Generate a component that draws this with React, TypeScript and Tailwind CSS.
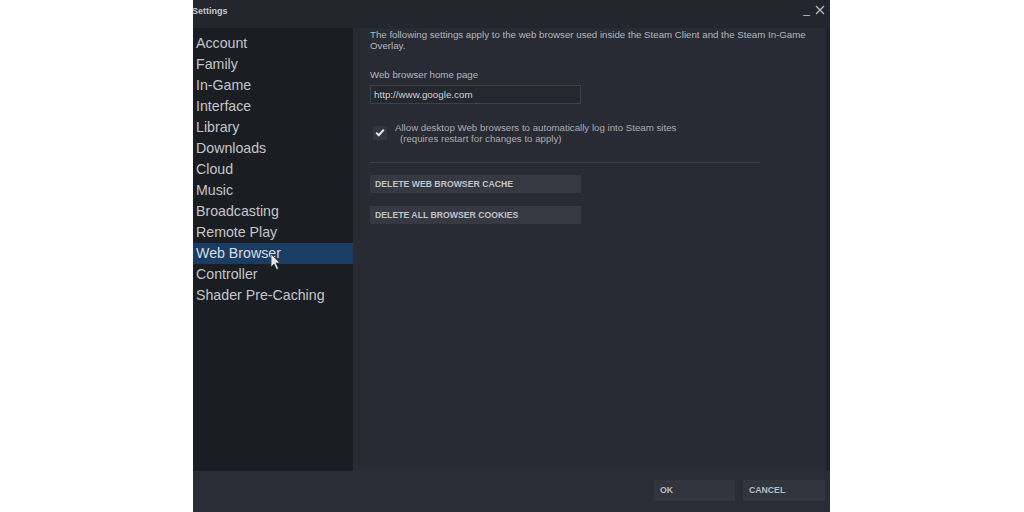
import React from "react";

const items = [
  "Account",
  "Family",
  "In-Game",
  "Interface",
  "Library",
  "Downloads",
  "Cloud",
  "Music",
  "Broadcasting",
  "Remote Play",
  "Web Browser",
  "Controller",
  "Shader Pre-Caching",
];

export default function App() {
  return (
    <div
      className="flex w-[1024px] h-[512px] bg-white overflow-hidden"
      style={{ fontFamily: '"Liberation Sans", Arial, sans-serif' }}
    >
      <div className="w-[193px] shrink-0" />
      <div className="w-[637px] shrink-0 flex flex-col bg-[#23262d]">
        {/* title bar */}
        <div className="h-[28px] flex items-start justify-between relative">
          <span className="text-[9px] text-[#c8cace] font-bold mt-[5px] -ml-[1px]">Settings</span>
          <div className="flex items-start gap-[5px] mr-[5px] mt-[2px] text-[#b8bbc0]">
            <span className="text-[12px] leading-none mt-[1px]">_</span>
            <svg width="10" height="10" viewBox="0 0 10 10" className="mt-[3px]">
              <path d="M1 1 L9 9 M9 1 L1 9" stroke="#b8bbc0" strokeWidth="1.3" />
            </svg>
          </div>
        </div>
        <div className="flex flex-1 min-h-0">
          {/* sidebar */}
          <div className="w-[160px] shrink-0 bg-[#1a1d22] pt-[5px] relative">
            {items.map((it) => (
              <div
                key={it}
                className={`h-[21px] leading-[21px] pl-[3px] text-[14.2px] ${
                  it === "Web Browser" ? "bg-[#1c3d63] text-[#d6dbe2]" : "text-[#c3c5ca]"
                }`}
              >
                {it}
              </div>
            ))}
            <svg
              width="12"
              height="18"
              viewBox="0 0 12 18"
              className="absolute left-[77px] top-[225px]"
            >
              <path
                d="M1 1 L1 14 L4 11 L6.5 16.5 L8.5 15.5 L6 10 L10 10 Z"
                fill="#e8e8e8"
                stroke="#333"
                strokeWidth="0.8"
              />
            </svg>
          </div>
          {/* main */}
          <div className="flex-1 bg-[#282b33] pl-[17px] pt-[1px] border-r-[4px] border-[#1f2228]">
            <p className="text-[9.7px] leading-[11px] text-[#b4b7bc] w-[445px]">
              The following settings apply to the web browser used inside the Steam Client and the Steam In-Game Overlay.
            </p>
            <div className="mt-[17px] text-[9.7px] text-[#b4b7bc]">Web browser home page</div>
            <div className="mt-[2px] w-[211px] h-[19px] border border-[#3d4049] bg-[#24272e] text-[9.8px] text-[#d0d2d6] pl-[3px] leading-[17px]">
              http://www.google.com
            </div>
            <div className="mt-[21px] flex items-start">
              <div className="ml-[3px] mt-[1px] w-[14px] h-[14px] bg-[#33363e] flex items-center justify-center rounded-[1px]">
                <svg width="10" height="9" viewBox="0 0 10 9">
                  <path d="M1.2 4.6 L3.8 7.2 L8.8 1.6" stroke="#e6e7ea" strokeWidth="2" fill="none" />
                </svg>
              </div>
              <div className="ml-[8px] -mt-[3px] text-[9.7px] leading-[11px] text-[#a9acb2]">
                <div>Allow desktop Web browsers to automatically log into Steam sites</div>
                <div className="pl-[5px]">(requires restart for changes to apply)</div>
              </div>
            </div>
            <div className="mt-[18px] w-[390px] h-[1px] bg-[#3a3d46]" />
            <div className="mt-[12px] w-[211px] h-[18px] bg-[#363942] text-[8.7px] font-bold text-[#c0c3c8] pl-[5px] leading-[18px]">
              DELETE WEB BROWSER CACHE
            </div>
            <div className="mt-[13px] w-[211px] h-[18px] bg-[#363942] text-[8.7px] font-bold text-[#c0c3c8] pl-[5px] leading-[18px]">
              DELETE ALL BROWSER COOKIES
            </div>
          </div>
        </div>
        {/* bottom bar */}
        <div className="h-[41px] shrink-0 bg-[#2a2d36] flex items-start justify-end gap-[8px] pr-[5px] pt-[9px]">
          <div className="w-[81px] h-[21px] bg-[#32353e] text-[8.7px] font-bold text-[#b9bcc1] pl-[6px] leading-[21px]">OK</div>
          <div className="w-[82px] h-[21px] bg-[#32353e] text-[8.7px] font-bold text-[#b9bcc1] pl-[6px] leading-[21px]">CANCEL</div>
        </div>
      </div>
      <div className="flex-1" />
    </div>
  );
}
